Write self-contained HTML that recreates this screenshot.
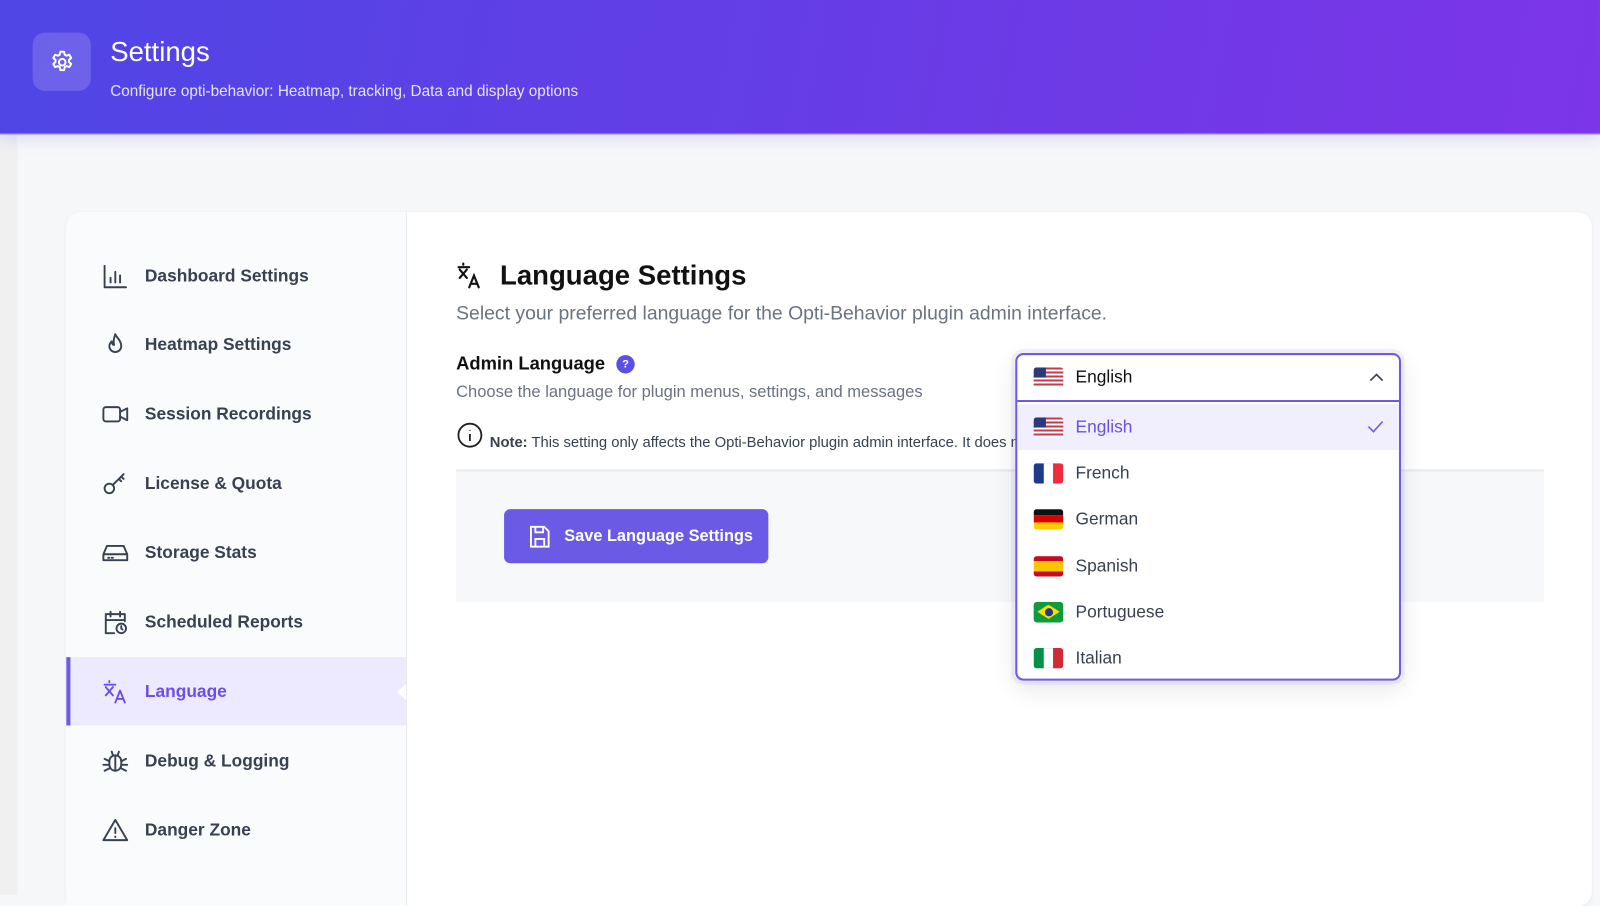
<!DOCTYPE html>
<html><head><meta charset="utf-8"><style>
*{box-sizing:border-box;margin:0;padding:0}
html,body{width:1600px;height:877px;overflow:hidden;background:#f6f7f9}
#w{position:absolute;left:0;top:0;width:1568px;height:860px;transform:scale(1.0204);transform-origin:0 0;font-family:"Liberation Sans",sans-serif;color:#1f2937}
.strip{position:absolute;left:0;top:0;width:17px;height:877px;background:#f0f0f1}
.hdr{position:absolute;left:0;top:0;width:1568px;height:132px;background:linear-gradient(100deg,#4f46e5 0%,#6a3be6 60%,#7c35e8 100%);border-bottom:1px solid #a89cf5;box-shadow:0 4px 14px rgba(99,102,241,.18)}
.gear{position:absolute;left:32px;top:32px;width:57px;height:57px;border-radius:12px;background:rgba(255,255,255,.16);display:flex;align-items:center;justify-content:center}
.hdr h1{position:absolute;left:108px;top:36px;font-size:27px;font-weight:400;color:#fff}
.hdr p{position:absolute;left:108px;top:81px;font-size:15px;color:#e6e3ff}
.card{position:absolute;left:65px;top:208px;width:1495px;height:680px;background:#fff;border-radius:14px;box-shadow:0 1px 4px rgba(0,0,0,.05)}
.side{position:absolute;left:65px;top:208px;width:334px;height:680px;background:#fafbfc;border-right:1px solid #e5e7eb;border-top-left-radius:14px}
.item{position:absolute;left:0;width:333px;height:67px;display:flex;align-items:center;padding-left:34px;font-size:17px;font-weight:bold;color:#374151}
.item svg{width:28px;height:28px;margin-right:15px;fill:none;stroke:#374151;stroke-width:1.6;stroke-linecap:round;stroke-linejoin:round}
.item.act{background:#ede9fe;color:#6b4ee6;border-left:4px solid #6d5ae6;padding-left:30px}
.item.act svg{stroke:#6b4ee6}
.tri{position:absolute;right:0;top:26px;width:0;height:0;border-top:8px solid transparent;border-bottom:8px solid transparent;border-right:9px solid #fff}
.main{position:absolute;left:447px}
.sel{position:absolute;left:995px;top:346px;width:378px;height:321px;border:2px solid #6d5ae6;border-radius:8px;background:#fff;box-shadow:0 8px 24px rgba(0,0,0,.1),0 0 0 4px rgba(109,90,230,.08)}
.opt{position:absolute;left:0;width:374px;height:45px;display:flex;align-items:center;padding-left:16px;font-size:17px;color:#374151}
.flag{width:29px;height:20px;border-radius:3px;margin-right:12px;overflow:hidden;display:flex}
</style></head><body><div id="w">
<div class="strip"></div>
<div class="hdr">
<div class="gear"><svg width="26" height="26" viewBox="0 0 24 24" fill="none" stroke="#fff" stroke-width="1.8" stroke-linejoin="round"><path d="M10.3 2.5h3.4l.5 2.6 1.7 1 2.5-.9 1.7 2.9-2 1.7v2l2 1.7-1.7 2.9-2.5-.9-1.7 1-.5 2.6h-3.4l-.5-2.6-1.7-1-2.5.9-1.7-2.9 2-1.7v-2l-2-1.7 1.7-2.9 2.5.9 1.7-1z"/><circle cx="12" cy="12" r="3"/></svg></div>
<h1>Settings</h1>
<p>Configure opti-behavior: Heatmap, tracking, Data and display options</p>
</div>
<div class="card"></div>
<div class="side">
<div class="item" style="top:29px"><svg viewBox="0 0 24 24"><path d="M3 3v18h18M8 17v-4M12 17V8M16 17v-6"/></svg>Dashboard Settings</div>
<div class="item" style="top:96px"><svg viewBox="0 0 24 24"><path d="M12 3c1 3 5 5 5 10a5 5 0 0 1-10 0c0-2 1-3 2-4 0 2 1 3 2 3-1-3 0-6 1-9z"/></svg>Heatmap Settings</div>
<div class="item" style="top:164px"><svg viewBox="0 0 24 24"><rect x="2" y="6" width="14" height="12" rx="2"/><path d="M16 10l6-3v10l-6-3"/></svg>Session Recordings</div>
<div class="item" style="top:232px"><svg viewBox="0 0 24 24"><circle cx="7" cy="16" r="4"/><path d="M10 13l9-9M17 6l2 2M15 8l2 2"/></svg>License &amp; Quota</div>
<div class="item" style="top:300px"><svg viewBox="0 0 24 24"><path d="M2 13l3-7h14l3 7v5H2zM2 13h20M6 16h1M9 16h1"/></svg>Storage Stats</div>
<div class="item" style="top:368px"><svg viewBox="0 0 24 24"><path d="M11 21H4V5h16v6M4 10h16M8 3v4M16 3v4"/><circle cx="17" cy="17" r="4"/><path d="M17 15v2l1 1"/></svg>Scheduled Reports</div>
<div class="item act" style="top:436px"><svg viewBox="0 0 24 24"><path d="M3 6h9M7 3v1M4 8l6 7M10 8l-6 7M12 21l4-10 4 10M13.5 18h5"/></svg>Language<div class="tri"></div></div>
<div class="item" style="top:504px"><svg viewBox="0 0 24 24"><rect x="7" y="7" width="10" height="13" rx="5"/><path d="M12 7v13M9 4l1 3M15 4l-1 3M3 10l4 2M21 10l-4 2M2 15h5M22 15h-5M3 20l4-2M21 20l-4-2"/></svg>Debug &amp; Logging</div>
<div class="item" style="top:572px"><svg viewBox="0 0 24 24"><path d="M12 3L2 20h20zM12 10v4M12 17v.5"/></svg>Danger Zone</div>
</div>
<svg style="position:absolute;left:447px;top:256px" width="28" height="28" viewBox="0 0 24 24" fill="none" stroke="#111" stroke-width="1.8" stroke-linecap="round"><path d="M2 5h9M6 2v1M3 7l6 7M9 7l-6 7M11 22l4-10 4 10M12.5 19h5"/></svg>
<div class="main" style="left:490px;top:255px;font-size:27px;font-weight:bold;color:#111">Language Settings</div>
<div class="main" style="top:297px;font-size:19px;color:#6b7280">Select your preferred language for the Opti-Behavior plugin admin interface.</div>
<div class="main" style="top:346px;font-size:18px;font-weight:bold;color:#111">Admin Language <span style="display:inline-block;width:18px;height:18px;border-radius:50%;background:#5b4fe6;color:#fff;font-size:11px;text-align:center;line-height:18px;vertical-align:2px;margin-left:6px">?</span></div>
<div class="main" style="top:375px;font-size:16.2px;color:#6b7280">Choose the language for plugin menus, settings, and messages</div>
<svg style="position:absolute;left:447px;top:413px" width="27" height="27" viewBox="0 0 24 24" fill="none" stroke="#222" stroke-width="1.6"><circle cx="12" cy="12" r="10"/><path d="M12 11v6M12 7.5v.5"/></svg>
<div class="main" style="left:480px;top:426px;font-size:14.5px;color:#374151;white-space:nowrap"><b>Note:</b> This setting only affects the Opti-Behavior plugin admin interface. It does not change your WordPress site language or other plugins.</div>
<div style="position:absolute;left:447px;top:460px;width:1066px;height:130px;background:#f7f8fa;border-top:2px solid #e9eaee"></div>
<div style="position:absolute;left:494px;top:499px;width:259px;height:53px;background:#6b5ae6;border-radius:6px;color:#fff;font-size:16px;font-weight:bold;display:flex;align-items:center;padding-left:22px"><svg width="26" height="26" viewBox="0 0 24 24" fill="none" stroke="#fff" stroke-width="1.7" style="margin-right:11px"><path d="M4 3h12l4 4v14H4zM8 3v5h7V3M8 21v-7h8v7"/></svg>Save Language Settings</div>
<div class="sel">
<div class="opt" style="top:0;height:46px;border-bottom:2px solid #6d5ae6;color:#111"><div class="flag" style="background:repeating-linear-gradient(#c8374a 0 2px,#fff 2px 4px);position:relative"><div style="position:absolute;left:0;top:0;width:12px;height:10px;background:#2b3a7a"></div></div>English<svg style="position:absolute;right:14px;top:16px" width="16" height="12" viewBox="0 0 16 12" fill="none" stroke="#374151" stroke-width="1.6"><path d="M2 9l6-6 6 6"/></svg></div>
<div class="opt" style="top:48px;background:#f1eefe;color:#6b4ee6"><div class="flag" style="background:repeating-linear-gradient(#c8374a 0 2px,#fff 2px 4px);position:relative"><div style="position:absolute;left:0;top:0;width:12px;height:10px;background:#2b3a7a"></div></div>English<svg style="position:absolute;right:14px;top:14px" width="18" height="16" viewBox="0 0 18 16" fill="none" stroke="#7c5ee6" stroke-width="1.6"><path d="M2 8l5 5 9-10"/></svg></div>
<div class="opt" style="top:93px"><div class="flag"><div style="flex:1;background:#1e3a8a"></div><div style="flex:1;background:#fff;border-top:1px solid #eee;border-bottom:1px solid #eee"></div><div style="flex:1;background:#ef2b3c"></div></div>French</div>
<div class="opt" style="top:138px"><div class="flag" style="flex-direction:column"><div style="flex:1;background:#111"></div><div style="flex:1;background:#dd0000"></div><div style="flex:1;background:#ffce00"></div></div>German</div>
<div class="opt" style="top:184px"><div class="flag" style="flex-direction:column"><div style="flex:1;background:#c60b1e"></div><div style="flex:2;background:#ffc400"></div><div style="flex:1;background:#c60b1e"></div></div>Spanish</div>
<div class="opt" style="top:229px"><div class="flag" style="background:#0f9a3c;align-items:center;justify-content:center;position:relative"><div style="width:22px;height:14px;background:#fedf00;clip-path:polygon(50% 0,100% 50%,50% 100%,0 50%);display:flex;align-items:center;justify-content:center"><div style="width:8px;height:8px;border-radius:50%;background:#1e3a8a"></div></div></div>Portuguese</div>
<div class="opt" style="top:274px"><div class="flag"><div style="flex:1;background:#009246"></div><div style="flex:1;background:#fff;border-top:1px solid #eee;border-bottom:1px solid #eee"></div><div style="flex:1;background:#ce2b37"></div></div>Italian</div>
</div>
</div></body></html>
